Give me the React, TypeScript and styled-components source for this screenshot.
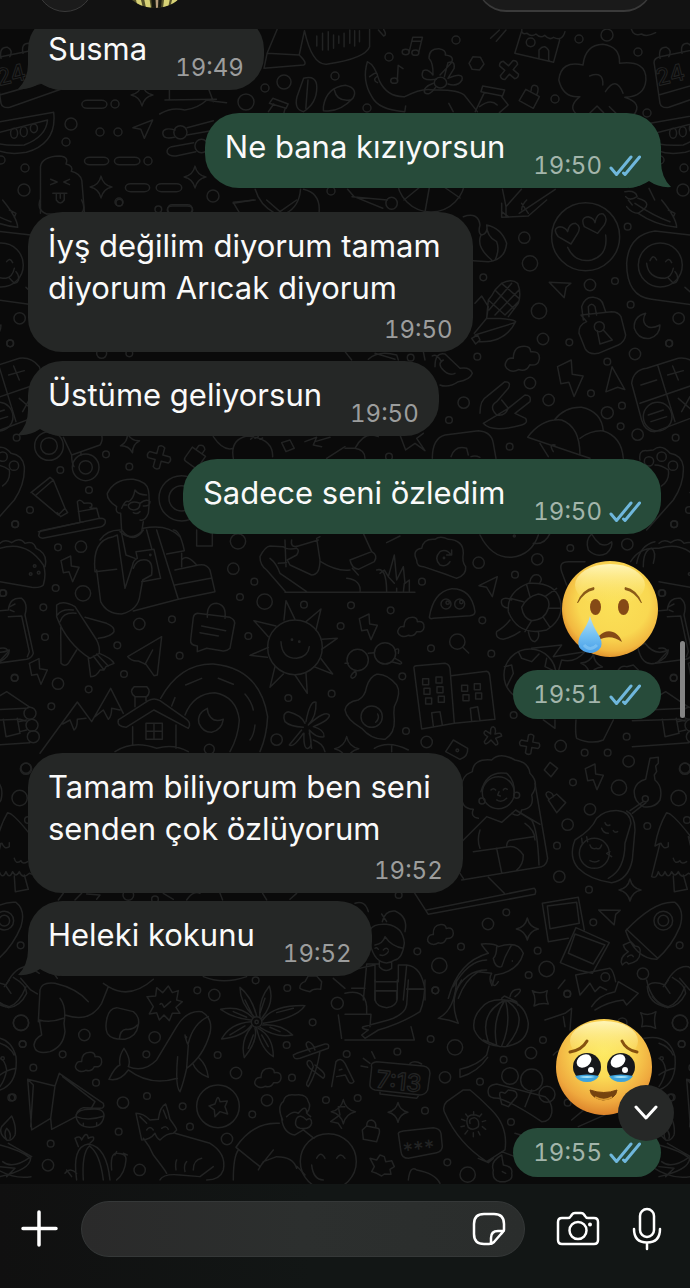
import React from "react";
import styled, { createGlobalStyle } from "styled-components";

const GlobalStyle = createGlobalStyle`
  * { box-sizing: border-box; }
  body {
    margin: 0;
    background: #0a0a0a;
    font-family: Inter, "Liberation Sans", sans-serif;
  }
  button { padding: 0; border: 0; background: none; color: inherit; font: inherit; cursor: pointer; }
`;

const Page = styled.div`
  position: relative;
  display: grid;
  grid-template-rows: auto minmax(0, 1fr) auto;
  grid-template-columns: minmax(0, 1fr);
  height: 100vh;
  overflow: hidden;
  color: #fafafa;
`;

const Wallpaper = styled.svg`
  position: absolute;
  inset: 0;
  width: 100%;
  height: 100%;
  fill: none;
  stroke: #222323;
  stroke-width: 1.5;
  stroke-linecap: round;
  stroke-linejoin: round;
  pointer-events: none;

  path, circle, ellipse, rect { vector-effect: non-scaling-stroke; }
  text {
    font-family: Inter, "Liberation Sans", sans-serif;
    font-weight: 500;
  }
`;

const Header = styled.header`
  position: relative;
  display: flex;
  align-items: flex-end;
  height: 29px;
  padding: 0 37px 0 36px;
  overflow: hidden;
  background: #121212;
`;

const BackButton = styled.button`
  flex: none;
  width: 58px;
  height: 58px;
  margin-bottom: 17px;
  border: 1px solid #3a3a3a;
  border-radius: 50%;
  background: #1b1b1b;
`;

const Avatar = styled.svg`
  flex: none;
  width: 74px;
  height: 74px;
  margin: 0 auto 21px 24px;
`;

const CallPill = styled.button`
  flex: none;
  width: 176px;
  height: 58px;
  margin-bottom: 17px;
  border: 1px solid #3a3a3a;
  border-bottom-width: 2px;
  border-radius: 29px;
  background: #1a1a1a;
`;

const Chat = styled.main`
  position: relative;
  display: flex;
  flex-direction: column;
  justify-content: flex-end;
  padding: 0 29px 7px 28px;
  overflow: hidden;
`;

const Bubble = styled.article<{ $sent?: boolean; $stacked?: boolean; $gap: number }>`
  position: relative;
  isolation: isolate;
  display: flex;
  flex: none;
  flex-direction: ${(p) => (p.$stacked ? "column" : "row")};
  align-items: flex-end;
  align-self: ${(p) => (p.$sent ? "flex-end" : "flex-start")};
  gap: ${(p) => (p.$stacked ? 7 : 28)}px;
  margin-top: ${(p) => p.$gap}px;
  padding: 13px 20px 8px;
  border-radius: 34px;
  background: ${(p) => (p.$sent ? "#274b3a" : "#252726")};
`;

const Text = styled.p<{ $stacked?: boolean }>`
  margin: ${(p) => (p.$stacked ? "0 12px 0 0" : "0 0 12px")};
  font-size: 31px;
  line-height: 42px;
  white-space: pre-line;
`;

const Meta = styled.span<{ $sent?: boolean }>`
  display: flex;
  align-items: center;
  gap: 7px;
  color: ${(p) => (p.$sent ? "#a3b5ab" : "#9c9d9d")};
  font-size: 24px;
  font-variant-numeric: tabular-nums;
  line-height: 28px;
`;

const Ticks = styled.svg`
  width: 32px;
  height: 22px;
  fill: none;
  stroke: #6fb7dc;
  stroke-width: 3;
  stroke-linecap: round;
  stroke-linejoin: round;
`;

const TailShape = styled.svg<{ $sent?: boolean }>`
  position: absolute;
  z-index: -1;
  bottom: 0;
  ${(p) => (p.$sent ? "right: -10px; transform: scaleX(-1);" : "left: -10px;")}
  width: 42px;
  height: 36px;
  fill: ${(p) => (p.$sent ? "#274b3a" : "#252726")};
`;

const EmojiMessage = styled.article<{ $gap: number }>`
  display: flex;
  flex: none;
  flex-direction: column;
  align-items: flex-end;
  gap: 13px;
  margin-top: ${(p) => p.$gap}px;
`;

const EmojiArt = styled.svg`
  width: 96px;
  height: 96px;
  margin-right: 3px;
  overflow: visible;
`;

const TimePill = styled.div`
  display: flex;
  align-items: center;
  justify-content: flex-end;
  height: 49px;
  padding: 0 20px;
  border-radius: 25px;
  background: #274b3a;
`;

const ScrollThumb = styled.div`
  position: absolute;
  top: 612px;
  right: 5px;
  width: 5px;
  height: 77px;
  border-radius: 3px;
  background: #858585;
`;

const ScrollDown = styled.button`
  position: absolute;
  right: 16px;
  bottom: 43px;
  display: grid;
  place-items: center;
  width: 56px;
  height: 56px;
  border-radius: 50%;
  background: #262827;
`;

const Composer = styled.footer`
  position: relative;
  display: flex;
  align-items: center;
  height: 104px;
  padding: 0 28px 14px 20px;
  background: linear-gradient(90deg, #101010, #121615 45%, #121615);
`;

const Field = styled.div`
  display: flex;
  flex: 1;
  align-items: center;
  min-width: 0;
  height: 56px;
  margin: 0 31px 0 23px;
  padding: 0 18px 0 28px;
  border: 1px solid #353838;
  border-radius: 28px;
  background: linear-gradient(90deg, #2a2a2a, #2c2f2e 50%, #2a2d2c);
`;

const MessageInput = styled.input`
  flex: 1;
  min-width: 0;
  padding: 0;
  border: 0;
  outline: 0;
  background: transparent;
  color: #fff;
  font: 31px Inter, sans-serif;
`;

const IconButton = styled.button<{ $gap?: number }>`
  display: grid;
  flex: none;
  place-items: center;
  margin-left: ${(p) => p.$gap ?? 0}px;
`;

const Icon = styled.svg`
  display: block;
  fill: none;
  stroke: #fff;
  stroke-linecap: round;
  stroke-linejoin: round;
`;

/* ---------- wallpaper doodles ---------- */

type Dot = [number, number, number];

const Dots = ({ items }: { items: Dot[] }) => (
  <>
    {items.map(([x, y, r]) => (
      <circle key={`${x}-${y}-${r}`} cx={x} cy={y} r={r} />
    ))}
  </>
);

const at = (x: number, y: number, s = 1, r = 0) => `translate(${x} ${y}) rotate(${r}) scale(${s})`;

type Spot = { x: number; y: number; s?: number; r?: number };

const Sparkle = ({ x, y, s, r }: Spot) => (
  <path transform={at(x, y, s, r)} d="M0-33Q6-6 33 0Q6 6 0 33Q-6 6-33 0Q-6-6 0-33Z" />
);
const Bolt = ({ x, y, s, r }: Spot) => (
  <path transform={at(x, y, s, r)} d="M-27-24L2-38L4-8L27-4L8 39L-3 9L-20 12Z" />
);
const Cloud = ({ x, y, s, r }: Spot) => (
  <path
    transform={at(x, y, s, r)}
    d="M-28 28Q-45 20-35 5Q-30-2-20 0Q-20-28 5-28Q20-28 20-15Q42-18 40 2Q38 18 18 15Q10 32-8 26Q-18 32-28 28Z"
  />
);
const Cross = ({ x, y, s, r }: Spot) => (
  <path
    transform={at(x, y, s, r)}
    d="M-9-30Q0-38 9-30V-9H30Q38 0 30 9H9V30Q0 38-9 30V9H-30Q-38 0-30-9H-9Z"
  />
);
const Pointer = ({ x, y, s, r }: Spot) => (
  <path transform={at(x, y, s, r)} d="M-32-26L32-14L16-4L6 26Z" />
);
const Bottle = ({ x, y, s, r }: Spot) => (
  <g transform={at(x, y, s, r)}>
    <path d="M-22-14H22V20Q22 28 14 28H-14Q-22 28-22 20ZM-10-14V-28Q0-40 10-28V-14" />
  </g>
);

const Doodles = () => (
  <g id="doodles">
    <Dots
      items={[
        [456, 40, 4], [389, 57, 4], [335, 76, 4], [284, 82, 7], [265, 88, 4], [246, 102, 8], [555, 99, 4],
        [579, 39, 4], [607, 35, 6], [638, 52, 4], [647, 113, 4], [367, 108, 4], [71, 124, 6], [100, 132, 4],
        [118, 132, 4], [66, 142, 4], [115, 104, 4], [148, 161, 4], [25, 168, 4], [24, 190, 6], [119, 202, 4],
        [213, 196, 6], [331, 191, 4], [1, 160, 4],
      ]}
    />
    {/* laptop, voice note, music, flower girl, shop, tree */}
    <g transform="scale(.44 .3333)">
      <path d="M630 88L607 160L680 165L692 92M607 160L600 205L690 195Q700 190 680 165M692 92Q710 200 745 192Q830 175 840 140V88" />
      <path d="M720 108V138M733 100V150M746 95V150M758 105V145M770 108V130M782 100V140M795 90V130M806 92V138M817 92V125" />
      <path d="M930 155L938 112L960 112L952 155M938 124H958" />
      <ellipse cx="922" cy="156" rx="8" ry="8" /><ellipse cx="944" cy="158" rx="8" ry="8" />
      <path d="M903 242L905 196L916 206" /><ellipse cx="896" cy="242" rx="8" ry="8" />
      <path d="M1066 190L1075 170L1092 172L1100 192L1090 210L1073 208Z" />
      <path d="M835 185Q852 195 862 242Q880 292 920 290Q960 262 985 270Q1040 268 1055 285L1085 335M835 185Q822 240 845 290Q860 330 920 335L922 318M840 230Q858 210 858 228Q845 240 858 248M1020 310L1030 335" />
      <path d="M992 238Q950 245 962 212Q972 205 984 225Q985 190 975 175Q975 145 998 146Q1015 150 1012 165Q1035 168 1025 190L1000 225M1010 230L1018 188Q1035 180 1032 205L1018 235Q1055 215 1050 240Q1040 262 1018 252M990 262Q975 290 965 278Q960 262 985 250" />
      <ellipse cx="1001" cy="248" rx="14" ry="16" />
      <path d="M1185 95L1170 160L1258 187L1272 120M1225 175V150Q1238 130 1247 152V183M1186 88Q1184 105 1198 100Q1208 112 1218 102Q1228 116 1238 106Q1248 122 1258 112Q1278 125 1284 95" />
      <ellipse cx="1206" cy="127" rx="10" ry="13" />
      <path d="M1325 195Q1330 135 1370 133Q1410 140 1408 190Q1470 180 1468 240Q1465 290 1420 292Q1462 310 1440 345M1325 195Q1275 180 1270 240Q1280 295 1318 290Q1290 320 1310 342M1340 228Q1372 212 1370 255M1376 275Q1400 225 1416 280M1340 340L1357 318L1372 338M1385 320L1400 340" />
      <path d="M1487 192Q1484 175 1500 170L1620 138L1636 268L1520 322Q1503 325 1500 310ZM1497 285L1630 235" />
      <path d="M1500 175Q1495 140 1515 142Q1528 150 1520 170M1550 160Q1545 130 1563 130Q1576 138 1570 155" />
      <path d="M1435 88Q1440 110 1458 102Q1470 112 1490 98M860 90L872 108Q880 106 872 88M1115 115L1135 90M1128 124L1150 90" />
      <path d="M690 235Q720 225 720 262Q720 310 690 335Q668 330 675 290ZM700 240L695 325M735 320Q742 262 785 256Q815 265 802 295Q770 340 735 332ZM760 270Q765 305 795 300" />
      <path d="M620 295L655 312L650 325L612 310ZM622 312L610 335M648 325L645 340" />
      <path d="M1195 268L1226 290L1212 325L1180 302ZM1207 272Q1207 250 1220 258Q1226 265 1220 284" />
      <path d="M1097 258L1147 270L1142 288L1093 275ZM1100 280L1080 335M1140 290L1155 315L1135 338M1090 320Q1115 295 1130 315" />
      <path d="M372 268H495M375 300L492 298M385 270V298M475 270L485 305M363 342Q390 320 420 330Q450 325 470 300Q490 305 515 308" />
      <path d="M-30 372L122 337Q130 430 60 457Q0 470-30 430ZM-25 405L108 360Q105 410 55 435Q0 440-25 420" />
      <ellipse cx="32" cy="400" rx="8" ry="15" /><ellipse cx="54" cy="395" rx="8" ry="15" /><ellipse cx="77" cy="385" rx="8" ry="13" />
      <path d="M347 360L302 383L320 388L328 415Z" />
      <rect x="186" y="301" width="57" height="24" rx="12" /><rect x="192" y="472" width="55" height="22" rx="12" />
      <rect x="260" y="472" width="58" height="22" rx="12" /><rect x="285" y="551" width="55" height="24" rx="12" />
      <rect x="355" y="551" width="58" height="24" rx="12" /><rect x="380" y="618" width="58" height="24" rx="12" />
      <path d="M485 362L425 383M398 390Q370 380 370 400Q372 420 396 412M425 405L480 392M440 428L390 440Q378 445 380 458Q385 470 400 468L445 455" />
      <ellipse cx="410" cy="397" rx="15" ry="20" /><ellipse cx="458" cy="438" rx="15" ry="20" />
      <path d="M92 640V500Q95 470 135 468Q157 470 150 492Q168 498 162 514Q182 520 186 542L192 640M115 538L130 546L115 554M158 538L145 546L158 554M120 580H152M128 582V600Q137 618 146 600V582M137 582V595" />
      <path d="M580 568Q590 615 625 640M683 568Q680 620 650 640M530 607L580 600M530 607L545 640M690 568Q730 580 725 640M790 568L805 590L870 625M800 590L880 600M1142 568L1150 620L1185 568M1150 620V650M1180 640L1262 568M1420 575Q1445 570 1448 590Q1430 605 1422 590M1450 595Q1490 610 1450 640M1475 565L1488 600" />
      <ellipse cx="890" cy="610" rx="13" ry="18" />
    </g>
    <text x="658" y="86" fontSize="23" strokeWidth="1" transform="rotate(-14 658 86)">24</text>
    <Sparkle x={142} y={95} s={0.33} /><Sparkle x={101} y={187} s={0.33} /><Sparkle x={195} y={177} s={0.33} />
    <Cross x={509} y={70} s={0.33} r={40} />
    <circle cx="431" cy="178" r="34" /><path d="M431 178L425 212M431 178L404 200M431 178L460 198" />

    {/* faces, corn, lock, calculator, hands */}
    <g transform="translate(345 200) scale(.3333)">
      <Dots
        items={[
          [538, 113, 17], [555, 190, 23], [415, 232, 10], [848, 80, 10], [735, 255, 17], [810, 243, 10],
          [582, 333, 23], [594, 417, 17], [673, 427, 10], [857, 314, 10], [1001, 355, 17], [973, 430, 10],
          [870, 462, 17], [787, 485, 10], [397, 470, 10], [555, 549, 17], [611, 600, 17], [738, 580, 10],
          [831, 617, 10], [787, 638, 18], [827, 679, 10], [878, 704, 17], [992, 713, 10], [356, 608, 17],
          [312, 660, 10], [494, 740, 10], [197, 473, 10], [132, 770, 10], [988, 972, 10],
          [722, 110, 102], [946, 195, 66], [763, 380, 15], [938, 650, 43],
          [950, 770, 14], [912, 784, 14], [984, 797, 14],
        ]}
      />
      <path d="M668 142Q690 190 740 180Q790 165 782 105M678 132L640 110Q620 85 645 80Q662 82 668 95Q672 70 692 70Q710 80 698 100ZM758 100L718 80Q705 52 730 50Q748 55 750 68Q755 38 775 42Q790 55 778 75Z" />
      <path d="M470 10V52L550 48L605 0M470 35L490 50M530 10L550 40M545 0Q530 15 530 30" />
      <path d="M355 50Q400 35 405 75Q398 100 410 105Q430 100 425 75Q470 85 485 130Q480 180 430 185L385 182M408 105Q392 140 440 180M425 75Q425 110 455 125Q465 150 450 180" />
      <path d="M845 20Q860 40 880 40Q930 75 995 82Q995 55 950 0M870 10Q930 50 975 65M970 30L990 40L985 52M850 0L862 15" />
      <path d="M1035 105L930 93Q850 105 845 190Q845 290 920 298L1040 314M905 190Q910 235 960 235Q980 230 985 205M915 182Q925 160 935 180M962 185Q972 170 980 188M968 232L985 250Q1005 245 995 222L990 215M1020 262L1040 280" />
      <path d="M390 310L410 288L430 320L425 355L388 400M425 355Q500 355 512 365Q480 430 400 425M390 405L510 368M380 415L398 405L405 420L392 432ZM425 355L430 300Q440 290 450 270L470 250Q500 235 518 250Q530 280 520 310L490 350M430 300L480 345M450 270L505 325M470 250L522 295M432 330L500 250M450 345L522 270M480 345L520 305" />
      <path d="M708 345L800 335Q820 335 828 350L842 405Q840 425 820 435L760 460Q730 465 720 445L702 400Q700 375 725 365ZM715 360L710 320Q720 290 745 292Q770 295 775 315L782 335M732 350L730 320Q740 305 750 320L755 345M757 392L765 432L802 420L775 390" />
      <path d="M902 340Q865 350 868 385Q880 420 915 415Q945 405 945 375Q915 390 902 375Q890 360 902 340Z" />
      <Pointer x={648} y={268} r={-8} /><Cloud x={531} y={475} s={1.3} /><Bolt x={676} y={534} s={1.42} />
      <Pointer x={802} y={550} s={1.2} r={50} />
      <path d="M235 455L240 480M262 468Q275 460 290 485M270 500Q270 455 300 462L345 505Q375 500 382 520Q375 540 340 545Q310 565 285 555M290 505Q310 530 330 520M295 480Q275 490 295 510" />
      <path d="M405 640Q405 600 425 590L480 545Q500 545 490 565L455 605Q430 620 455 645Q480 650 490 625L470 600M490 625L540 585Q560 585 555 605L510 640L542 655Q550 670 530 675Q440 700 415 670Z" />
      <path d="M860 550Q865 510 905 505L1000 475Q1035 470 1060 500L1090 600Q1080 640 1050 650L930 695Q900 695 890 660ZM938 495L990 665M885 610L1060 550M888 555L935 540M968 525L1015 512M983 498L1000 540M1000 595L1040 630M1035 590L1010 635M910 645L955 630M918 665L965 650" />
      <path d="M548 712Q590 655 650 660Q705 680 705 765ZM585 730L610 770M625 755Q610 730 630 735M628 660Q660 620 710 622Q770 635 775 693M705 715Q740 690 775 693Q830 710 835 775M705 765L735 775" />
      <path d="M262 775Q262 715 300 705L400 692Q440 695 445 730L453 775M318 770Q330 735 365 745L370 765M378 770Q390 765 405 772M165 705L182 750L210 730L240 752M240 752L215 715L235 700M0 745H30Q60 750 60 775M30 745Q60 690 100 710" />
      <path d="M885 780Q880 750 905 752L925 750Q950 730 975 760Q1010 765 1015 800Q1018 850 985 900L905 990M950 858Q975 840 970 810Q950 795 930 795" />
      <path d="M0 455L20 480M70 478Q100 450 155 465L160 480M90 460L150 478" />
    </g>

    {/* magnifier, toothbrush, teacher */}
    <g transform="translate(0 200) scale(.3333)">
      <Dots
        items={[
          [358, 8, 10], [475, 28, 10], [30, 430, 10], [305, 460, 15], [388, 460, 10], [147, 738, 43],
          [147, 738, 25], [257, 802, 40], [257, 802, 20], [318, 763, 10], [388, 800, 10], [181, 810, 10],
          [267, 870, 10], [90, 930, 10], [45, 973, 10],
        ]}
      />
      <rect x="503" y="14" width="74" height="26" rx="13" />
      <path d="M120 0Q110 30 140 42H240Q260 30 245 0M700 10L760 0M800 0L840 35L890 0" />
      <path d="M190 712L215 765L300 735Q310 720 305 705M215 765Q215 790 222 800M243 755V765" />
      <path d="M640 710Q670 755 700 745M700 775Q690 720 740 708M740 708Q820 715 818 770M752 718L760 710M765 715L775 710M780 718L788 714M915 725L950 712L940 735L965 740M945 725L990 712M980 775L1035 740" />
      <path d="M845 728L870 720L883 745L858 755Z" />
      <Sparkle x={390} y={730} s={0.9} r={-15} /><Cross x={477} y={772} s={1.05} r={15} /><Bottle x={588} y={768} s={1.1} r={35} />
      <path d="M93 878L150 832L160 840L195 925L175 945L98 880M160 840L108 885M172 938L182 950L203 938L195 925" />
      <path d="M122 992L300 955Q320 955 315 970Q310 980 295 982L128 1015Q108 1012 122 992ZM240 965L232 905Q240 895 252 910Q280 905 275 920Q260 925 290 925L298 955M235 935L290 925" />
      <path d="M365 995L362 940Q345 940 350 920Q320 900 322 880Q345 835 400 838Q440 845 445 870Q450 895 445 940Q435 965 420 960M365 925Q375 900 385 905Q400 900 405 870Q415 885 440 885M370 915H380M385 915Q395 900 420 910Q420 930 400 930Q385 928 385 915M420 910Q440 895 450 905Q450 920 430 918M400 938Q410 945 420 935M360 995Q395 1025 425 995L430 965M300 1020Q320 990 360 990M430 985Q500 970 540 1010" />
      <circle cx="545" cy="895" r="68" /><circle cx="545" cy="895" r="38" />
    </g>

    {/* reader, shuttle, cabin, road, sun, runner */}
    <g transform="translate(0 530) scale(.3333)">
      <Dots
        items={[
          [174, 52, 10], [243, 50, 17], [167, 174, 10], [249, 190, 23], [130, 232, 10], [135, 321, 10],
          [10, 189, 10], [418, 282, 17], [516, 268, 10], [352, 346, 10], [539, 377, 10], [372, 432, 10],
          [174, 461, 17], [266, 478, 10], [44, 444, 10], [154, 529, 10], [714, 34, 23], [700, 116, 17],
          [763, 155, 10], [720, 201, 10], [794, 215, 23], [912, 224, 10], [745, 318, 10], [865, 504, 10],
          [995, 491, 10], [830, 629, 17], [628, 658, 15], [1022, 288, 10], [885, 352, 82], [104, 108, 4],
          [92, 132, 4], [116, 128, 4], [876, 329, 2], [898, 335, 2], [90, 550, 18], [96, 586, 18], [100, 620, 18],
        ]}
      />
      <Bolt x={210} y={116} /><Bolt x={115} y={424} />
      <path d="M-85 95Q-60 50 0 55Q80 30 130 105Q140 130 130 165Q120 175 95 172L0 155M0 40Q15 25 35 38Q60 20 75 40Q100 30 108 55Q145 70 135 110" />
      <path d="M-30 245L25 240Q30 200 65 205Q85 220 75 255L100 370Q95 385 80 388L-10 400M25 260L65 258L88 365L82 380M0 355Q20 350 25 365L0 392M30 230L45 222M30 240L42 245" />
      <path d="M170 225Q190 210 225 230L290 330Q300 350 298 370L270 385Q200 340 170 260ZM172 255Q185 235 220 240M180 275Q190 245 228 250M255 262L320 280Q345 290 342 305Q335 320 295 325M182 285L183 400Q195 412 205 400L230 360M265 385L272 440Q290 440 300 420L312 420L318 410L342 400Q335 385 298 370M280 378L312 420M290 372L325 408" />
      <path d="M115 5L250-25M285 125Q275 30 340 20L352 15L375 175L398 105Q400 90 412 85L408 65L462 58L482 145L425 155M285 125L350 118M290 120L302 215Q320 252 365 252Q415 240 420 195L428 150L455 135Q460 95 440 90Q410 85 400 115M365 10L378 75L405 85M365 0Q400 45 430 0M440 0L455 55M470 0L535 208L645 185L630 120Q620 100 595 105L525 120M500 72L553 62Q540 0 520 0M525 165L632 145M400 243L535 208M545 110V70M545 90Q560 70 590 105" />
      <circle cx="451" cy="75" r="2" />
      <path d="M590 0V48H637V10M622 262Q620 220 650 220Q680 225 675 265M592 250L690 262Q708 270 703 285L690 355Q680 365 665 362L620 355L592 365L592 348Q570 345 572 330L580 262Q582 252 592 250ZM605 288L677 302M600 308L655 318" />
      <path d="M485 320L383 380Q395 395 415 393L438 403L462 437L472 435ZM435 403L458 360" />
      <path d="M852 270L858 212L885 268M918 275L963 237L948 300M965 328L1012 325L965 358M962 385L998 432L942 410M918 430L922 490L885 435M850 432L810 472L825 410M802 382L750 376L805 352M805 320L762 272L828 288M843 335Q845 385 890 385Q925 380 928 350" />
      <path d="M-80 545L20 485L90 532M-80 542L78 535M-80 572L60 568L78 573M10 568L18 620L60 610L52 565M55 575L80 570M60 605L80 600M-80 650L90 638" />
      <path d="M120 670L232 516L275 575L332 475L370 550M188 582L210 570L222 600Q232 595 232 568L258 565M285 560L310 540L325 568Q335 560 335 535L360 540" />
      <path d="M355 570L445 512Q462 502 480 512L560 568Q575 580 565 595L462 540L378 592Q350 590 355 570ZM398 590V645M528 585V655M438 580H487V628H438ZM462 580V628M438 604H487M405 530V500M438 512V500M403 470H440Q455 485 440 500H405Q385 485 403 470ZM345 665Q400 630 470 655Q520 640 565 665" />
      <path d="M482 505Q540 400 640 402Q780 415 803 560Q800 620 780 665M555 555Q580 490 645 488Q710 500 718 570Q715 620 690 665M557 465L605 445M655 445L700 463M735 492Q755 515 760 540M765 585Q762 615 750 630M515 528L525 503" />
      <path d="M622 535Q590 550 597 580Q610 608 635 607Q665 600 670 568Q645 578 632 562Q622 550 622 535Z" />
      <path d="M915 580Q905 555 865 545Q845 550 855 575Q870 590 910 592M918 575Q930 510 948 517Q950 560 925 585Q975 540 988 555Q990 570 940 590Q975 600 972 620Q950 625 928 600L935 655M905 600Q880 630 868 645Q880 655 910 610M912 610Q910 660 925 655Q940 650 928 610M940 630Q970 640 975 665" />
      <path d="M855 30L858 110M835 100L860 98M858 187L800 120Q780 105 780 80Q795 50 810 48L850 50Q860 60 890 55Q900 60 890 75L862 90L870 105L935 135Q960 135 960 90L950 25L960 20M875 30Q870 55 895 48L955 30M810 85Q830 100 840 130Q870 150 920 185M855 187H1245M962 95Q1010 125 1050 120" />
    </g>

    {/* cloud, turtle, buildings, egg, ball */}
    <g transform="translate(345 530) scale(.3333)">
      <Dots
        items={[
          [401, 98, 17], [577, 88, 17], [510, 134, 10], [231, 155, 10], [137, 241, 10], [18, 226, 10],
          [412, 271, 10], [258, 355, 10], [439, 371, 10], [172, 439, 10], [183, 603, 10], [245, 636, 17],
          [506, 555, 10], [647, 648, 17], [719, 668, 10], [788, 668, 10], [845, 620, 10], [986, 443, 10],
          [676, 54, 10], [847, 43, 17], [950, 189, 10], [38, 390, 32], [120, 370, 32], [303, 222, 15],
          [344, 222, 15], [308, 218, 5], [349, 216, 5], [337, 335, 23], [80, 560, 32], [297, 84, 2], [508, 18, 3], [337, 661, 4],
        ]}
      />
      <path d="M55 10L80 65M15 90L80 65Q100 75 88 95L40 118Q20 115 15 90M22 115L40 135M5 145Q50 150 45 187M95 120Q125 110 125 187M105 130L118 120L130 140L148 75L155 150L175 110L180 160L193 150V187M148 160L130 140M155 175V187M175 187L178 160" />
      <path d="M215 90Q200 60 230 55Q235 25 270 28Q285 15 310 28Q355 30 355 70Q350 95 362 110Q365 135 335 145L300 132L235 110Q215 110 215 90ZM318 75Q305 55 285 65Q265 85 285 105Q305 112 315 95M305 75H320V60" />
      <path d="M125 38L165 18M405 15Q440 85 500 82Q560 75 580 15M565 40Q600 45 615 10" />
      <path d="M457 140L402 167L425 172L442 200Z" />
      <path d="M253 262Q265 185 320 176Q380 175 390 245Q390 255 375 257L265 265Q255 268 253 262Z" />
      <path d="M490 245Q485 185 550 160Q630 155 645 210Q660 265 605 300Q520 320 490 245ZM530 232Q545 200 580 192Q620 200 610 235Q600 270 560 272Q535 265 530 232ZM535 215L495 205M555 200L545 165M600 200L635 175M612 235L648 235M595 262L615 292M560 272L540 305M555 155Q560 130 580 135Q595 145 585 158M490 235Q465 230 470 210Q480 200 500 210M495 270Q480 290 455 305Q450 325 475 328Q505 320 525 305M550 305Q555 335 570 335Q585 325 580 305M650 125Q640 95 670 95L720 95M650 125L665 165" />
      <Bolt x={70} y={290} /><Cloud x={197} y={290} />
      <path d="M353 352L371 369M70 370L88 368M0 400H10M32 422Q10 440 22 445Q38 440 32 422M150 360Q165 350 160 370M150 385Q180 400 165 402L140 395" />
      <path d="M207 415Q205 408 215 407L300 400Q312 402 315 415L328 580L230 597ZM318 437L425 424Q432 425 434 435L450 568L328 580M265 588L260 548L285 545L292 585M380 573L376 535L398 530L405 572M233 446h18v18h-18zM273 441h18v18h-18zM237 475h18v18h-18zM276 470h18v18h-18zM242 504h18v18h-18zM280 499h18v18h-18zM350 466h18v18h-18zM388 461h18v18h-18zM354 494h18v18h-18zM392 489h18v18h-18z" />
      <path d="M95 433Q125 430 155 465Q170 490 148 530Q145 550 148 570Q150 610 120 628Q80 630 50 595Q5 570 0 540Q5 515 40 510Q60 500 65 470Q75 440 95 433ZM98 552Q105 565 92 577" />
      <circle cx="555" cy="435" r="78" />
      <path d="M520 365L530 385L560 395L582 372M478 410L500 405L505 430L485 470M605 385L600 410L632 425M560 355L650 345L625 380L720 365Q690 400 650 390L640 425" />
      <Sparkle x={740} y={405} r={10} /><Cross x={554} y={643} s={0.9} r={10} /><Sparkle x={5} y={656} s={1.1} />
      <path d="M820 420Q830 405 845 410L865 405L880 420M595 570L630 595V570M693 570Q690 610 695 625Q740 645 775 630L805 570M88 655Q130 630 190 660M140 645V665M445 590Q455 595 450 612Q470 605 470 618L452 625Q465 645 452 645L438 630Q420 650 418 635L428 620Q410 610 422 602L437 612Q435 590 445 590Z" />
      <path d="M325 630L368 655Q370 680 345 688L302 665Z" />
      <path d="M740 12Q720 30 730 60Q755 85 785 70Q805 50 800 35Q785 50 765 42Q750 30 740 12ZM878 350Q890 410 930 400Q970 385 970 360Q930 380 900 340Z" />
      <path d="M875 100Q885 45 930 35M895 110Q895 60 920 55Q935 65 925 100" />
    </g>

    {/* desk worker, key, avocado, rocket, photos, koi */}
    <g transform="translate(345 740) scale(.3333)">
      <Dots
        items={[
          [684, 127, 10], [851, 64, 17], [822, 143, 23], [735, 208, 17], [668, 254, 17], [636, 317, 10],
          [643, 410, 17], [732, 449, 10], [907, 258, 10], [1001, 174, 23], [1020, 85, 15], [1026, 240, 10],
          [484, 517, 10], [429, 552, 17], [348, 620, 10], [217, 634, 10], [283, 677, 23], [578, 632, 10],
          [551, 705, 10], [605, 687, 23], [745, 547, 10], [1004, 616, 10], [894, 701, 17], [161, 465, 10],
          [271, 751, 10], [460, 158, 48], [411, 183, 9], [515, 166, 9], [901, 176, 9], [955, 542, 28], [955, 542, 16],
          [748, 340, 45], [781, 711, 13], [667, 762, 10],
        ]}
      />
      <path d="M400 235Q375 230 385 208Q345 205 352 165Q340 110 382 95Q385 55 440 60Q465 35 510 60Q550 65 555 100Q585 130 560 165Q570 205 530 210Q525 235 500 220M408 155Q425 90 485 100Q510 120 508 165M438 150Q445 142 452 150M475 150Q480 142 487 148M455 180Q470 190 485 175M462 155L458 165L466 168" />
      <path d="M425 230L470 247L512 210L560 240Q578 270 582 375M425 230L350 305M570 130L608 355Q605 375 590 380L350 420M512 210L585 253M405 270Q395 300 405 325M385 335L490 320Q515 315 535 345Q535 375 515 390M455 325L470 398M485 320Q485 300 500 300L565 290M540 250Q570 270 570 300M208 458L250 523L570 463Q575 450 568 445L245 510M430 412L478 460M345 400L355 415" />
      <Bolt x={748} y={110} />
      <path d="M598 90L615 67L638 85L618 110ZM610 180L635 162L662 188L635 218ZM612 178Q595 160 610 155Q625 160 625 170" />
      <path d="M915 55L940 52V70L932 78L935 95L928 105L930 120Q955 140 945 180Q930 205 895 200Q865 185 868 150Q875 125 902 118ZM895 185L855 212M903 188L862 220" />
      <path d="M845 213Q870 225 870 270L862 360Q850 420 800 428Q735 420 700 385Q670 350 690 300Q740 270 755 235Q780 210 820 212Q855 215 858 250L840 310Q840 390 790 415M780 248Q785 260 795 255M770 265Q775 280 790 280M805 272Q810 280 818 275M735 315Q740 330 755 325Q765 330 770 315M735 362Q750 370 762 362M795 335L785 340L800 350M710 295L712 310M725 290L728 305" />
      <path d="M965 218Q940 260 930 318L945 310L920 410Q935 418 940 395Q950 420 960 395Q970 420 980 395Q990 415 1000 395Q1010 420 1030 400L1060 410L1030 290L1045 300Q1000 240 975 222ZM985 408L988 455L1027 448L1015 405M948 310Q955 330 970 320V308M985 355Q990 375 1005 362Q1010 375 1025 365" />
      <Sparkle x={855} y={450} /><Sparkle x={547} y={567} /><Pointer x={797} y={530} r={-10} />
      <path d="M592 490L700 472L718 570M592 490L610 605L670 595M607 498L695 487L703 550L615 566ZM693 563L793 608L742 700L700 690L646 668ZM690 582L780 615L745 672L670 640ZM692 705L795 685Q805 690 812 725M692 705L705 765L735 730L750 755L765 740L785 750" />
      <path d="M842 572Q930 480 990 487Q1020 510 1005 560Q980 620 935 658Q870 655 842 572ZM845 568L938 655M858 605L835 615Q840 630 850 635Q820 655 832 675Q845 660 850 672Q885 665 885 640Q890 620 870 618ZM848 650Q860 640 865 650" />
      <path d="M907 740Q920 720 960 735Q990 675 1030 680L1060 700M907 740Q910 790 960 800M958 735L975 760" />
      <Cloud x={285} y={582} r={-5} />
      <path d="M112 545Q120 510 150 513Q190 530 180 575M110 522L125 545M75 570Q85 550 125 553Q175 560 178 610Q172 655 150 660Q120 680 95 655Q82 640 75 610M90 615Q115 610 120 590Q140 620 175 625M90 625Q95 620 100 628M115 630Q125 620 130 630M105 645Q120 650 130 635M103 662V680Q120 700 140 685V665M65 672H90V725H160V675H185L175 780M65 672L55 780M90 672H103M25 690Q60 680 90 675M160 675H185Q230 680 240 750L240 780M185 747H240M20 745H60M90 780V752H155V780" />
      <path d="M310 775Q340 665 430 640Q405 610 410 612Q450 610 460 620Q520 600 535 640Q520 695 450 705Q440 745 440 735Q430 715 440 700L400 695Q360 720 340 775M455 620Q455 645 445 655Q450 685 470 680Q480 645 500 615M502 662V664M325 740Q370 660 425 660M330 760Q360 690 425 690" />
      <path d="M30 490Q60 480 70 515" />
    </g>

    {/* woman walking, whale, poinsettia, fox, cactus */}
    <g transform="translate(0 740) scale(.3333)">
      <Dots
        items={[
          [78, 86, 17], [385, 465, 16], [465, 478, 10], [592, 751, 10], [643, 765, 17],
          [767, 721, 10], [862, 744, 10], [63, 848, 23], [253, 885, 17], [464, 892, 17], [439, 943, 10],
          [68, 912, 10], [188, 943, 10], [100, 983, 10], [288, 1028, 10], [34, 1073, 10], [369, 1088, 17],
          [441, 1068, 10], [548, 1099, 10], [653, 945, 10], [708, 999, 17], [860, 915, 10], [938, 847, 10],
          [876, 1013, 10], [801, 1081, 17], [757, 1123, 10], [978, 1080, 10], [570, 1160, 10], [681, 1197, 17],
          [356, 1175, 10], [152, 1211, 10], [144, 1276, 17], [419, 1290, 17], [654, 1099, 64], [770, 846, 16],
          [770, 846, 5], [558, 892, 2], [1012, 790, 18],
        ]}
      />
      <path d="M115 845L120 750Q125 725 165 730Q230 745 265 785M180 775Q200 800 192 850L195 875Q190 920 150 935Q105 945 102 915Q105 895 125 885L118 840Q150 850 190 835M195 825Q270 850 305 790L325 740L310 730M325 740Q390 780 460 718M62 715L92 750L112 762M165 705L172 715M610 710Q670 735 740 710" />
      <path d="M40 712Q80 735 80 760Q60 800 25 803Q0 795-20 770" />
      <path d="M441 770L467 768L470 743L488 758L505 738L517 758L535 752L530 780L547 785L528 802L540 820L517 820L508 842L492 825L478 840L470 818L448 822L460 800ZM480 793Q485 785 492 802L512 785M320 840Q325 805 350 803L400 815Q420 830 415 855Q410 890 375 898Q335 900 322 880Q315 865 320 840ZM358 898Q360 870 378 868Q400 870 412 855" />
      <path d="M327 1018Q345 980 360 975Q355 950 372 925Q395 960 385 980Q430 1000 470 960L530 860Q560 810 605 815Q640 835 630 880Q610 950 560 985Q550 1030 540 1055Q525 1040 533 950M327 1018Q360 1025 385 990Q450 1040 532 1015M555 885Q560 910 565 915L560 985M565 910Q580 850 625 830M598 955Q620 975 625 1012Q590 1000 578 970" />
      <path d="M762 830Q720 790 720 742Q755 770 770 828M780 830Q775 780 808 738Q825 790 785 835M788 840Q820 795 915 797Q890 835 790 850M788 855Q840 850 878 885Q830 895 780 862M775 865Q820 890 820 950Q785 930 770 866M765 865Q775 900 733 953Q720 900 755 860M755 855Q730 890 665 897Q690 850 752 845M752 840Q700 835 662 808Q720 795 757 832M735 780L755 820M795 775L780 820M880 805L830 818M690 885L735 858M745 925L760 885M805 920L785 885M700 815L740 832M840 875L810 862" />
      <path d="M900 745Q898 730 915 725L925 708H950L965 725L962 748Q940 745 930 755Q905 750 900 745ZM1000 715L1035 745M1015 825L1025 895" />
      <Cloud x={265} y={965} /><Cloud x={803} y={1013} />
      <path d="M-45 895Q30 880 48 950Q55 1030 0 1050M0 910Q30 920 42 945M0 955Q15 960 20 990M0 1005Q20 990 48 985M0 1040Q15 1020 20 990" /><circle cx="8" cy="955" r="5" />
      <path d="M83 1018L165 1038L152 1135L95 1170ZM83 1018L100 1035L92 1160M165 1038L178 1000L310 1090Q315 1105 300 1105L250 1103Q230 1110 228 1130L155 1168L152 1135M188 1010L285 1085L275 1103M228 1125Q230 1160 270 1162Q310 1160 312 1125Q310 1103 270 1108Q235 1108 228 1125ZM228 1130Q265 1145 312 1128M250 1150V1158M290 1148V1158" />
      <path d="M650 1078Q655 1065 660 1085L682 1083L675 1100L683 1122L660 1115L645 1130L643 1110L627 1098L645 1092Z" />
      <path d="M425 1200L408 1120Q430 1120 450 1140L475 1138Q480 1100 497 1092Q505 1115 510 1138Q530 1165 530 1170L520 1180Q500 1180 480 1200Q470 1195 465 1180Q450 1200 425 1200ZM420 1130L440 1150M490 1110L500 1135M440 1170Q450 1155 460 1170M485 1165Q500 1155 505 1168M430 1195Q450 1220 460 1245Q495 1290 500 1300M525 1180L630 1210Q680 1240 670 1290Q660 1320 620 1320M528 1290Q525 1270 530 1260M555 1295Q550 1275 560 1265M580 1290Q580 1260 605 1255M640 1280L600 1310M480 1320Q490 1300 540 1305L600 1310" />
      <path d="M225 1195Q240 1185 245 1200Q260 1170 265 1195Q285 1185 280 1200L270 1210M225 1195L235 1220M230 1320Q215 1220 265 1212Q320 1220 330 1320M250 1320Q245 1240 268 1218Q300 1240 310 1320M200 1290L215 1310M195 1300Q210 1280 230 1300M335 1290Q330 1240 350 1240Q380 1240 378 1260Q375 1300 350 1320M350 1235L345 1245M370 1240L382 1245" />
      <path d="M20 1200Q-5 1180 5 1160L35 1128Q50 1160 45 1185Q35 1205 20 1200ZM20 1200Q10 1180 20 1165Q35 1180 30 1195M0 1215Q60 1230 92 1255Q90 1290 0 1310M25 1210L95 1250M0 1280L45 1285L20 1310" />
      <path d="M848 1140Q830 1100 850 1085Q855 1060 885 1065Q920 1060 925 1085Q935 1100 920 1120L932 1130M860 1130Q880 1110 895 1120Q920 1090 920 1120M890 1135Q900 1120 920 1140Q935 1130 935 1150Q930 1170 900 1165Q880 1160 890 1135ZM845 1135Q850 1180 885 1185L910 1170M838 1150Q760 1145 708 1222L780 1280L820 1230M775 1290L790 1265L830 1250Q880 1250 890 1285Q880 1265 915 1305M700 1320Q700 1250 715 1230M910 1170L942 1195" />
      <circle cx="985" cy="1265" r="84" /><path d="M950 1255Q962 1230 975 1255M1010 1255Q1022 1235 1035 1255M935 1275Q940 1320 970 1320" />
      <path d="M880 945Q880 960 900 955L985 925Q990 910 975 912L890 940ZM930 935Q910 910 925 905Q940 910 945 930M960 935Q950 1000 925 1040Q915 1035 925 1020L940 980Q935 960 925 962Q915 970 930 985L970 1015Q980 1005 965 992L945 975M995 1040L1008 965Q1022 950 1035 970L1062 1025Q1055 1035 1046 1025L1036 1005L1010 1010M1018 990L1026 988M1035 1100L1015 1100L1020 1125L992 1145L1015 1150L1025 1165" />
      <path d="M175 480L190 460M225 480L245 460M260 462L300 465L290 478M490 460L520 478M560 480Q580 450 600 460M660 460L668 480M788 460L800 480M870 478L890 460" />
    </g>

    {/* lantern, surfboard, clock, password, globe */}
    <g transform="translate(345 980) scale(.3333)">
      <Dots
        items={[
          [271, 31, 10], [257, 177, 10], [330, 202, 23], [157, 215, 10], [5, 222, 10], [38, 354, 10],
          [300, 292, 17], [240, 392, 10], [476, 239, 10], [594, 180, 10], [558, 219, 17], [405, 305, 10],
          [498, 426, 10], [307, 547, 10], [368, 584, 23], [667, 41, 10], [1005, 129, 23], [1010, 192, 10],
          [495, 288, 25], [560, 300, 33], [606, 343, 24], [980, 352, 10], [668, 368, 10], [832, 128, 14],
        ]}
      />
      <path d="M280 115Q330 90 335 0M280 115Q315 120 340 130Q310 60 350 0M440 0Q445 30 460 5" />
      <path d="M408 85Q430 55 480 60Q540 65 550 130Q550 190 480 200Q410 200 388 150Q380 115 408 85ZM470 55L478 48L515 65L518 75M480 60Q400 100 430 185M480 60Q440 120 455 195M482 62Q500 130 470 198M485 62Q560 110 485 198M415 180L465 200M495 50Q500 25 525 28Q530 35 510 50M432 198L425 225Q400 255 345 268V292Q400 275 428 232" />
      <path d="M562 32Q585 45 607 32Q600 50 610 72Q588 68 567 78Q575 55 562 32ZM887 98Q910 110 933 95Q925 120 932 145Q910 135 890 140Q897 120 887 98Z" />
      <path d="M640 25L660 0M740 80Q760 45 810 35L820 5L880 40L845 75L835 60Q790 65 750 90M600 120L660 100L680 85L675 150M655 110L660 140M905 0Q920 70 970 80Q1000 70 1020 20M955 20L970 0M625 225Q640 205 665 210L680 220" />
      <path d="M90 0V60Q95 80 125 83Q155 80 157 55V0M90 32H155M185 28H235M240 0Q240 60 225 95Q170 130 100 150L60 175L50 165L70 150Q45 145 55 140L130 120Q180 105 185 75L190 0M0 40Q60 25 65 80V100M0 103H78L75 140M0 180H208L198 140" />
      <path d="M80 262Q75 248 95 245L235 258Q255 262 255 280L248 330Q240 345 225 345L90 330Q72 325 75 310ZM195 250Q210 240 230 252M105 335V342L215 355L222 345M80 215L90 235M55 235L75 250M48 258L68 262" />
      <path d="M355 330L305 365Q290 380 300 400Q340 490 425 545L480 510Q490 440 440 390Q400 350 375 330ZM400 535L430 548L445 535M470 515L510 530M375 430Q370 415 388 413Q405 418 400 440Q385 455 370 442Q360 420 372 408Q385 400 400 408M386 405V395M403 410L410 402M412 425L422 422M412 440L422 448M400 455L405 465M385 458V470M368 452L360 462M358 438L348 440M360 422L350 418M368 410L362 402" />
      <path d="M160 460Q162 455 175 453L265 443Q285 445 288 460L292 500Q290 515 275 518L190 535Q170 535 168 515ZM52 450L65 438L98 445Q105 445 103 460L95 485L55 478ZM65 438Q65 420 80 420Q95 425 92 442M75 535L95 540L105 525L118 530L122 545L140 542L148 560L135 568L138 583L118 582L110 588L95 580L80 575L88 560Z" />
      <path d="M190 600Q195 555 215 570Q270 580 285 610M445 570Q435 545 470 525L475 555Q505 560 500 580Q505 600 480 605H465Q440 600 445 570ZM472 575L482 580M430 340Q425 315 455 312L600 350Q625 370 620 400Q615 425 590 425Q510 370 460 355Q430 355 430 340ZM465 350Q460 330 480 340L490 330Q520 330 515 350L490 380L470 372ZM540 380L560 330" />
      <path d="M510 460L560 475M525 465L535 490M680 420L740 370M700 440L790 400M950 545Q980 570 1035 530M920 560Q980 600 1035 590" />
      <Sparkle x={159} y={397} s={0.9} /><Sparkle x={-5} y={395} s={1.1} />
      <text x="92" y="322" fontSize="72" strokeWidth="4" transform="rotate(6 92 322)">7:13</text>
      <text x="176" y="534" fontSize="62" fill="#222323" stroke="none" transform="rotate(-7 176 534)">***</text>
    </g>
  </g>
);

/* ---------- message parts ---------- */

const Tail = ({ sent }: { sent?: boolean }) => (
  <TailShape $sent={sent} viewBox="0 0 42 36" aria-hidden="true">
    <path d="M10 0V10Q10 25 0 35Q12 36 22 29Q29 34 42 36V0Z" />
  </TailShape>
);

const DoubleCheck = () => (
  <Ticks viewBox="0 0 32 22" role="img" aria-label="Okundu">
    <path d="M2 13L7.500 19.500L22 2M14.500 18L16 19.500L30.500 2" />
  </Ticks>
);

const Time = ({ value, sent }: { value: string; sent?: boolean }) => (
  <Meta $sent={sent}>
    <time>{value}</time>
    {sent && <DoubleCheck />}
  </Meta>
);

type MessageProps = { text: string; time: string; gap: number; sent?: boolean; stacked?: boolean; tail?: boolean };

const Message = ({ text, time, gap, sent, stacked, tail }: MessageProps) => (
  <Bubble $sent={sent} $stacked={stacked} $gap={gap}>
    {tail && <Tail sent={sent} />}
    <Text $stacked={stacked}>{text}</Text>
    <Time value={time} sent={sent} />
  </Bubble>
);

const CryingFace = () => (
  <EmojiArt viewBox="0 0 96 96" role="img" aria-label="Ağlayan yüz">
    <defs>
      <radialGradient id="cryBody" cx=".54" cy=".42" r=".6">
        <stop offset="0" stopColor="#fbe158" />
        <stop offset=".62" stopColor="#f9d851" />
        <stop offset=".86" stopColor="#f2b840" />
        <stop offset="1" stopColor="#df8d2a" />
      </radialGradient>
      <linearGradient id="shine" x2="0" y2="1">
        <stop offset="0" stopColor="#fff6b8" />
        <stop offset="1" stopColor="#fbe266" stopOpacity="0" />
      </linearGradient>
      <linearGradient id="tear" x2="0" y2="1">
        <stop offset="0" stopColor="#b8e0ef" />
        <stop offset=".5" stopColor="#76c2f3" />
        <stop offset="1" stopColor="#479ee8" />
      </linearGradient>
    </defs>
    <circle cx="48" cy="48" r="48" fill="url(#cryBody)" />
    <ellipse cx="48" cy="24" rx="35" ry="21" fill="url(#shine)" />
    <path d="M15 42Q20 28 32 26Q33 28 32 29Q22 31 16 42ZM80 42Q75 28 63 26Q62 28 63 29Q73 31 79 42Z" fill="#8a5a17" />
    <ellipse cx="33.500" cy="46" rx="5.500" ry="8" fill="#854a16" />
    <ellipse cx="61.500" cy="46" rx="5.500" ry="8" fill="#854a16" />
    <path d="M37 75C44 67 56 69 60 81C52 75 44 75 37 79Z" fill="#854a16" />
    <path d="M28 55Q30 63 36 73Q41 80 39 86Q35 92 28 92Q20 91 17 86Q15 80 19 73Q26 63 28 55Z" fill="url(#tear)" />
    <path d="M22 84Q28 91 35 84" fill="none" stroke="#8accf7" strokeWidth="3" opacity=".6" />
  </EmojiArt>
);

const HoldingTearsFace = () => (
  <EmojiArt viewBox="6 0 96 96" role="img" aria-label="Gözyaşlarını tutan yüz">
    <defs>
      <radialGradient id="holdBody" cx=".5" cy=".34" r=".66">
        <stop offset="0" stopColor="#fdeb62" />
        <stop offset=".4" stopColor="#fbdb55" />
        <stop offset=".8" stopColor="#efa93e" />
        <stop offset="1" stopColor="#dc832b" />
      </radialGradient>
    </defs>
    <circle cx="48" cy="48" r="48" fill="url(#holdBody)" />
    <ellipse cx="48" cy="22" rx="34" ry="20" fill="url(#shine)" />
    <path d="M14 33Q26 31 31 22M81 33Q70 31 66 22" fill="none" stroke="#86520f" strokeWidth="3" strokeLinecap="round" />
    {[31, 65].map((x) => (
      <g key={x}>
        <circle cx={x} cy="48" r="14" fill="#16171b" />
        <path d={`M${x - 12} 57Q${x} 54 ${x + 12} 57Q${x + 8} 63 ${x} 63Q${x - 8} 63 ${x - 12} 57Z`} fill="#3da2dc" />
        <path d={`M${x - 8} 58Q${x} 56 ${x + 8} 58Q${x} 60 ${x - 8} 58Z`} fill="#a8e3f7" />
        <ellipse cx={x - 3} cy="42" rx="8" ry="6" fill="#fff" transform={`rotate(-35 ${x - 3} 42)`} />
        <circle cx={x + 4} cy="51" r="3" fill="#fff" />
      </g>
    ))}
    <path d="M34 71Q48 76 61 71Q60 80 47 81Q35 79 34 71Z" fill="#75430f" stroke="#75430f" strokeLinejoin="round" />
    <path d="M39 78Q48 83 56 78" fill="none" stroke="#d99a32" strokeWidth="1.500" />
  </EmojiArt>
);

const AvatarPhoto = () => (
  <Avatar viewBox="0 0 74 74" role="img" aria-label="Profil fotoğrafı">
    <clipPath id="avatarClip"><circle cx="37" cy="37" r="37" /></clipPath>
    <g clipPath="url(#avatarClip)">
      <rect width="74" height="74" fill="#55522a" />
      <path d="M14 50L20 74H25L19 50ZM23 50L28 74H33L29 50ZM48 50L45 74H50L55 50ZM58 50L52 74H57L64 50Z" fill="#d7d276" />
      <path d="M32 50L34 74H38L37 50ZM42 50L39 74H43L45 50Z" fill="#17180f" />
      <path d="M37 50L38 74H40L41 50Z" fill="#b59c7c" />
    </g>
  </Avatar>
);

export default function App() {
  return (
    <>
      <GlobalStyle />
      <Page>
        <Wallpaper aria-hidden="true">
          <Doodles />
          <use href="#doodles" x="-659" />
          <use href="#doodles" x="659" />
          <use href="#doodles" x="1318" />
        </Wallpaper>

        <Header>
          <BackButton type="button" aria-label="Geri" />
          <AvatarPhoto />
          <CallPill type="button" aria-label="Ara" />
        </Header>

        <Chat>
          <Message text="Susma" time="19:49" gap={0} tail />
          <Message text="Ne bana kızıyorsun" time="19:50" gap={23} sent tail />
          <Message text={"İyş değilim diyorum tamam\ndiyorum Arıcak diyorum"} time="19:50" gap={24} stacked />
          <Message text="Üstüme geliyorsun" time="19:50" gap={9} tail />
          <Message text="Sadece seni özledim" time="19:50" gap={23} sent />
          <EmojiMessage $gap={27}>
            <CryingFace />
            <TimePill><Time value="19:51" sent /></TimePill>
          </EmojiMessage>
          <Message text={"Tamam biliyorum ben seni\nsenden çok özlüyorum"} time="19:52" gap={34} stacked />
          <Message text="Heleki kokunu" time="19:52" gap={8} tail />
          <EmojiMessage $gap={43}>
            <HoldingTearsFace />
            <TimePill><Time value="19:55" sent /></TimePill>
          </EmojiMessage>
          <ScrollThumb />
          <ScrollDown type="button" aria-label="En alta in">
            <Icon width="24" height="16" viewBox="0 0 24 16" strokeWidth="3">
              <path d="M2 2L12 13L22 2" />
            </Icon>
          </ScrollDown>
        </Chat>

        <Composer>
          <IconButton type="button" aria-label="Ekle">
            <Icon width="38" height="38" viewBox="0 0 38 38" strokeWidth="3.500">
              <path d="M19 2V35M3 18.500H36" />
            </Icon>
          </IconButton>
          <Field>
            <MessageInput type="text" aria-label="Mesaj" />
            <IconButton type="button" aria-label="Çıkartmalar">
              <Icon width="34" height="34" viewBox="0 0 34 34" strokeWidth="2.500">
                <path d="M12 2H22Q32 2 32 12V18Q31 20 29 22L22 30Q20 32 17 32H12Q2 32 2 22V12Q2 2 12 2Z" />
                <path d="M19 31.500V26Q19 19 26 19H31.500" />
              </Icon>
            </IconButton>
          </Field>
          <IconButton type="button" aria-label="Kamera">
            <Icon width="44" height="36" viewBox="0 0 44 36" strokeWidth="2.500">
              <path d="M6 7H12Q14 7 15 5L16 3.500Q17 2 19 2H25Q27 2 28 3.500L29 5Q30 7 32 7H38Q42 7 42 11V29Q42 33 38 33H6Q2 33 2 29V11Q2 7 6 7Z" />
              <circle cx="22" cy="19.500" r="8.500" />
              <circle cx="34" cy="13.500" r="2" fill="#fff" stroke="none" />
            </Icon>
          </IconButton>
          <IconButton type="button" aria-label="Sesli mesaj" $gap={32}>
            <Icon width="30" height="44" viewBox="0 0 30 44" strokeWidth="2.500">
              <rect x="8" y="2" width="14" height="28" rx="7" />
              <path d="M2 22Q2 35.500 15 35.500Q28 35.500 28 22M15 36V42" />
            </Icon>
          </IconButton>
        </Composer>
      </Page>
    </>
  );
}
